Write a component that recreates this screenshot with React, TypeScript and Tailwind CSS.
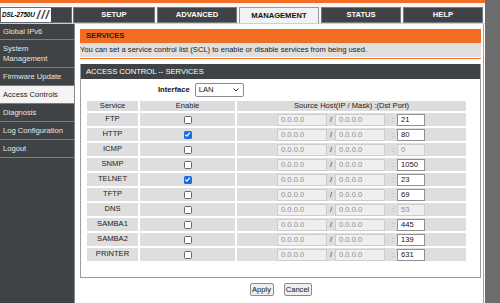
import React from "react";

const ORANGE = "bg-[#f26d21]";

const rows: { name: string; on: boolean; port: string; portEnabled: boolean }[] = [
  { name: "FTP", on: false, port: "21", portEnabled: true },
  { name: "HTTP", on: true, port: "80", portEnabled: true },
  { name: "ICMP", on: false, port: "0", portEnabled: false },
  { name: "SNMP", on: false, port: "1050", portEnabled: true },
  { name: "TELNET", on: true, port: "23", portEnabled: true },
  { name: "TFTP", on: false, port: "69", portEnabled: true },
  { name: "DNS", on: false, port: "53", portEnabled: false },
  { name: "SAMBA1", on: false, port: "445", portEnabled: true },
  { name: "SAMBA2", on: false, port: "139", portEnabled: true },
  { name: "PRINTER", on: false, port: "631", portEnabled: true },
];

function Box({ checked }: { checked: boolean }) {
  if (checked) {
    return (
      <div className="w-[8px] h-[8px] rounded-[1.5px] bg-[#1a6fe0] flex items-center justify-center">
        <svg width="7" height="7" viewBox="0 0 8 8">
          <path d="M1.5 4.2 L3.2 5.8 L6.6 2" stroke="white" strokeWidth="1.3" fill="none" />
        </svg>
      </div>
    );
  }
  return <div className="w-[8px] h-[8px] rounded-[1.5px] border border-[#666] bg-white" />;
}

function Inp({ w, value, enabled }: { w: string; value: string; enabled: boolean }) {
  return (
    <div
      className={`${w} h-[12px] border ${
        enabled ? "border-[#8f8f8f] bg-white text-[#111]" : "border-[#cdcdcd] bg-[#efefef] text-[#8c8c8c]"
      } pl-[3px] leading-[10px] text-[7.6px]`}
    >
      {value}
    </div>
  );
}

export default function App() {
  const tabs = ["SETUP", "ADVANCED", "MANAGEMENT", "STATUS", "HELP"];
  const side = [
    { t: ["Global IPv6"], h: "h-[16px]" },
    { t: ["System", "Management"], h: "h-[28px]" },
    { t: ["Firmware Update"], h: "h-[18px]" },
    { t: ["Access Controls"], h: "h-[18px]", active: true },
    { t: ["Diagnosis"], h: "h-[18px]" },
    { t: ["Log Configuration"], h: "h-[18px]" },
    { t: ["Logout"], h: "h-[18px]" },
  ];
  return (
    <div
      className="w-[500px] h-[303px] overflow-hidden flex bg-white text-[7.6px] text-[#222]"
      style={{ fontFamily: '"Liberation Sans", Arial, sans-serif' }}
    >
      <div className="w-[485px] flex flex-col">
        <div className={`h-[3px] ${ORANGE}`} />
        <div className="h-[4px] bg-[#f7f7f7]" />
        <div className="h-[16px] flex bg-[#f7f7f7]">
          <div className="w-[72px] flex bg-[#3f4345] border border-[#6a6d6f]">
            <div className="w-[50px] bg-white flex items-center pl-[1px] overflow-hidden">
              <span className="italic font-bold text-[6.4px] text-black tracking-[-0.1px]">DSL-2750U</span>
              <span className="italic font-bold text-[12px] leading-[12px] text-[#3f4345] ml-[2px] tracking-[1px]">///</span>
            </div>
          </div>
          <div className="flex gap-[2px] ml-[1px]">
            {tabs.map((t) => (
              <div
                key={t}
                className={`${t === "SETUP" ? "w-[82px]" : "w-[80px]"} h-[16px] flex items-center justify-center font-bold border ${
                  t === "MANAGEMENT"
                    ? "bg-[#f2f2f2] text-[#111] border-[#9a9a9a] border-b-0"
                    : "bg-[#3f4345] text-white border-[#76797b]"
                }`}
              >
                {t}
              </div>
            ))}
          </div>
        </div>
        <div className="flex-1 flex border-t border-[#cfcfcf]">
          <div className="w-[75px] bg-[#3f4345] border-r border-[#8a8a8a] flex flex-col">
            {side.map((s, i) => (
              <div
                key={i}
                className={`${s.h} border-b border-[#7c7f81] flex flex-col justify-center pl-[3px] leading-[10px] ${
                  s.active ? "bg-[#f4f4f4] text-[#222]" : "text-[#e6e6e6]"
                }`}
              >
                {s.t.map((l) => (
                  <div key={l}>{l}</div>
                ))}
              </div>
            ))}
          </div>
          <div className="flex-1 mr-[1px] border-r border-[#a0a0a0] pl-[5px] pr-[2px] pt-[5px] flex flex-col">
            <div className={`h-[14px] ${ORANGE} pl-[6px] font-bold leading-[14px] text-[#1e1e1e]`}>SERVICES</div>
            <div className="h-[14px] bg-[#dfdfdf] leading-[14px] text-[#222]">
              You can set a service control list (SCL) to enable or disable services from being used.
            </div>
            <div className={`mt-[1px] h-[1px] ${ORANGE}`} />
            <div className="mt-[5px] border-x border-b border-[#9c9c9c] flex flex-col">
              <div className="h-[15px] bg-[#3f4345] text-white pl-[5px] leading-[15px]">ACCESS CONTROL -- SERVICES</div>
              <div className="mt-[4px] h-[14px] flex items-center">
                <span className="ml-[77px] font-bold text-[#111]">Interface</span>
                <div className="ml-[5px] w-[49px] h-[14px] border border-[#8a8a8a] rounded-[2px] bg-white flex items-center justify-between pl-[3px] pr-[4px]">
                  <span className="text-[#111]">LAN</span>
                  <svg width="6" height="4" viewBox="0 0 6 4">
                    <path d="M0.5 0.5 L3 3 L5.5 0.5" stroke="#222" strokeWidth="1" fill="none" />
                  </svg>
                </div>
              </div>
              <div className="mt-[4px] ml-[6px] grid grid-cols-[51px_95px_229px] gap-[2px]">
                <div className="h-[10px] bg-[#dcdcdc] text-center leading-[10px]">Service</div>
                <div className="h-[10px] bg-[#dcdcdc] text-center leading-[10px]">Enable</div>
                <div className="h-[10px] bg-[#dcdcdc] text-center leading-[10px]">Source Host(IP / Mask) :(Dst Port)</div>
                {rows.map((r) => (
                  <React.Fragment key={r.name}>
                    <div className="h-[13px] bg-[#dedede] text-center leading-[12px]">{r.name}</div>
                    <div className="h-[13px] bg-[#dedede] flex items-center justify-center">
                      <Box checked={r.on} />
                    </div>
                    <div className="h-[13px] bg-[#dedede] flex items-center pl-[40px]">
                      <Inp w="w-[50px]" value="0.0.0.0" enabled={false} />
                      <span className="w-[8px] text-center text-[#333]">/</span>
                      <Inp w="w-[50px]" value="0.0.0.0" enabled={false} />
                      <span className="w-[12px] pl-[7px] text-[#888]">:</span>
                      <Inp w="w-[28px]" value={r.port} enabled={r.portEnabled} />
                    </div>
                  </React.Fragment>
                ))}
              </div>
              <div className="h-[16px]" />
            </div>
            <div className="mt-[5px] flex justify-center gap-[10px]">
              <div className="w-[24px] h-[13px] bg-[#efefef] border border-[#8a8a8a] rounded-[2px] flex items-center justify-center text-[#111]">
                Apply
              </div>
              <div className="w-[28px] h-[13px] bg-[#efefef] border border-[#8a8a8a] rounded-[2px] flex items-center justify-center text-[#111]">
                Cancel
              </div>
            </div>
          </div>
        </div>
      </div>
      <div className="w-[15px] bg-[#6d6d6d]" />
    </div>
  );
}
